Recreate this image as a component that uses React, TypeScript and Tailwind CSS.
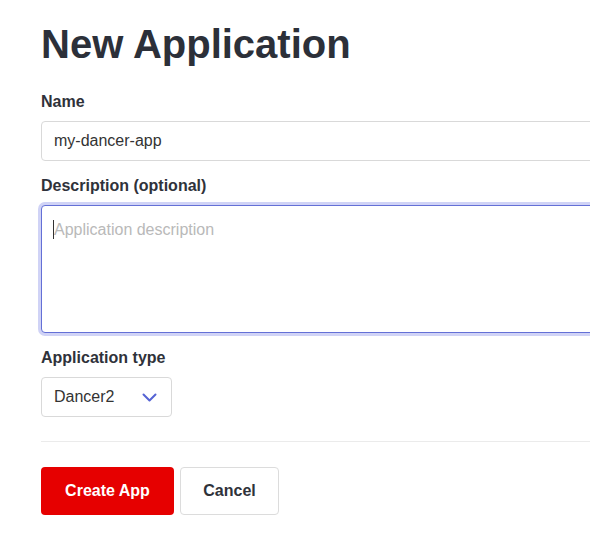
import React from "react";

const inputBase =
  "block w-full rounded-[4px] border border-[#d9d9d9] bg-white px-3 text-[16px] text-[#333] outline-none";

const App: React.FC = () => {
  return (
    <div className="min-h-[540px] w-full overflow-hidden bg-white font-['Liberation_Sans',Arial,sans-serif]">
      <div className="w-[640px] pl-[41px] pt-[20px]">
        <h1 className="text-[40px] font-bold leading-[48px] text-[#2c3039]">
          New Application
        </h1>

        <form className="mt-[22px]" onSubmit={(e) => e.preventDefault()}>
          {/* Name */}
          <label className="block text-[16px] font-bold leading-6 text-[#2f323a]">
            Name
          </label>
          <input
            type="text"
            defaultValue="my-dancer-app"
            className={`${inputBase} mt-[7px] h-[40px]`}
          />

          {/* Description */}
          <label className="mt-[13px] block text-[16px] font-bold leading-6 text-[#2f323a]">
            Description (optional)
          </label>
          <div className="relative mt-[7px]">
            <textarea
              placeholder="Application description"
              className="block h-[128px] w-full resize-none rounded-[4px] border border-[#6470d6] bg-white px-3 py-[14px] text-[16px] leading-[20px] text-[#333] caret-transparent shadow-[0_0_0_3px_#d0d3f6] outline-none placeholder:text-[#b9b9b9]"
            />
            <span className="absolute left-[12px] top-[15px] h-[19px] w-px bg-[#333]" />
          </div>

          {/* Application type */}
          <label className="mt-[13px] block text-[16px] font-bold leading-6 text-[#2f323a]">
            Application type
          </label>
          <div className="mt-[7px] flex h-[40px] w-[131px] items-center justify-between rounded-[4px] border border-[#d9d9d9] bg-white pl-3 pr-[14px]">
            <span className="text-[16px] text-[#333]">Dancer2</span>
            <svg
              width="15"
              height="9"
              viewBox="0 0 15 9"
              fill="none"
              stroke="#5563d4"
              strokeWidth="2"
              strokeLinecap="round"
              strokeLinejoin="round"
            >
              <path d="M1.5 1.5l6 6 6-6" />
            </svg>
          </div>

          <hr className="mt-[24px] border-0 border-t border-[#ebebeb]" />

          <div className="mt-[25px] flex gap-[6px]">
            <button
              type="submit"
              className="h-[48px] w-[133px] rounded-[4px] bg-[#e60000] text-[16px] font-bold text-white"
            >
              Create App
            </button>
            <button
              type="button"
              className="h-[48px] w-[99px] rounded-[4px] border border-[#dcdcdc] bg-white text-[16px] font-bold text-[#2f323a]"
            >
              Cancel
            </button>
          </div>
        </form>
      </div>
    </div>
  );
};

export default App;
